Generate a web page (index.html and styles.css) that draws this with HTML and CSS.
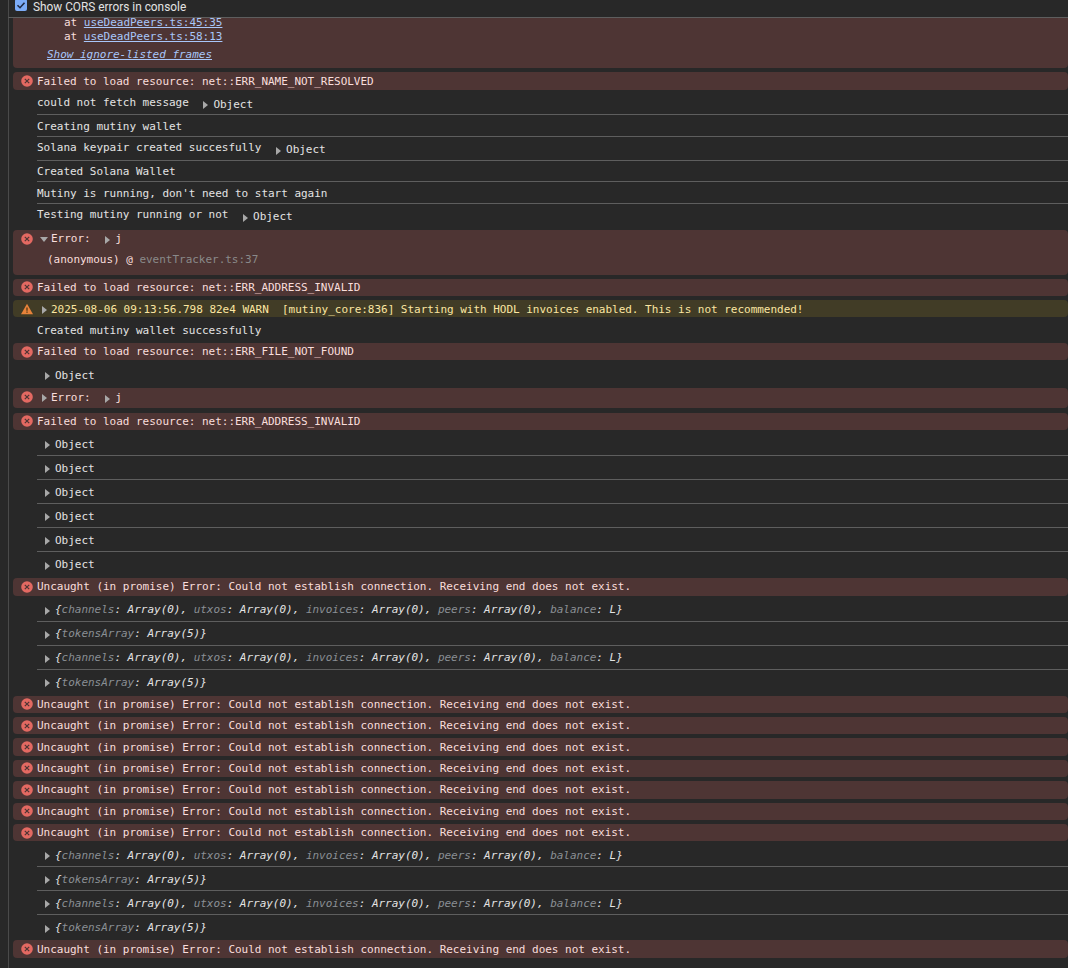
FILE: index.html
```html
<!DOCTYPE html>
<html lang="en">
<head>
    <meta charset="UTF-8">
    <title>Console</title>
    <link rel="stylesheet" href="styles.css">
</head>
<body>
    <svg class="defs" width="0" height="0">
        <symbol id="err" viewBox="0 0 12 12">
            <circle cx="6" cy="6" r="5.8" fill="#e46962"/>
            <path d="M3.8 3.8l4.4 4.4M8.2 3.8l-4.4 4.4" stroke="#4e3534" stroke-width="1.2"/>
        </symbol>
        <symbol id="warn" viewBox="0 0 12 12">
            <path d="M6 .8L12 11.2H0z" fill="#e8833a"/>
            <path d="M6 4.4v3.4M6 8.6v1.2" stroke="#332a10" stroke-width="1.1"/>
        </symbol>
    </svg>

    <div class="toolbar">
        <span class="checkbox">
            <svg width="12" height="12" viewBox="0 0 12 12"><path d="M2.5 6.2l2.5 2.5 4.5-5" fill="none" stroke="#1f2a44" stroke-width="1.6"/></svg>
        </span>
        <span>Show CORS errors in console</span>
    </div>

    <div class="console">
        <div class="msg error stack">
            <div class="trace first">at <a>useDeadPeers.ts:45:35</a></div>
            <div class="trace">at <a>useDeadPeers.ts:58:13</a></div>
            <div class="ignored">Show ignore-listed frames</div>
        </div>

        <div class="msg error"><svg class="icon"><use href="#err"/></svg>Failed to load resource: net::ERR_NAME_NOT_RESOLVED</div>
        <div class="msg log has-obj">could not fetch message <span class="obj"><i class="tri"></i>Object</span></div>
        <div class="msg log">Creating mutiny wallet</div>
        <div class="msg log has-obj">Solana keypair created succesfully <span class="obj"><i class="tri"></i>Object</span></div>
        <div class="msg log">Created Solana Wallet</div>
        <div class="msg log">Mutiny is running, don't need to start again</div>
        <div class="msg log has-obj last">Testing mutiny running or not <span class="obj"><i class="tri"></i>Object</span></div>

        <div class="msg error open">
            <div class="line"><svg class="icon"><use href="#err"/></svg><i class="tri down"></i>Error: <span class="obj"><i class="tri"></i>j</span></div>
            <div class="anon">(anonymous) @ <span class="dim">eventTracker.ts:37</span></div>
        </div>

        <div class="msg error"><svg class="icon"><use href="#err"/></svg>Failed to load resource: net::ERR_ADDRESS_INVALID</div>
        <div class="msg warn"><svg class="icon"><use href="#warn"/></svg><i class="tri lead"></i>2025-08-06 09:13:56.798 82e4 WARN  [mutiny_core:836] Starting with HODL invoices enabled. This is not recommended!</div>
        <div class="msg log last">Created mutiny wallet successfully</div>
        <div class="msg error"><svg class="icon"><use href="#err"/></svg>Failed to load resource: net::ERR_FILE_NOT_FOUND</div>
        <div class="msg log obj-row last"><i class="tri"></i>Object</div>
        <div class="msg error tall"><svg class="icon"><use href="#err"/></svg><i class="tri lead"></i>Error: <span class="obj"><i class="tri"></i>j</span></div>
        <div class="msg error"><svg class="icon"><use href="#err"/></svg>Failed to load resource: net::ERR_ADDRESS_INVALID</div>

        <div class="msg log obj-row"><i class="tri"></i>Object</div>
        <div class="msg log obj-row"><i class="tri"></i>Object</div>
        <div class="msg log obj-row"><i class="tri"></i>Object</div>
        <div class="msg log obj-row"><i class="tri"></i>Object</div>
        <div class="msg log obj-row"><i class="tri"></i>Object</div>
        <div class="msg log obj-row last"><i class="tri"></i>Object</div>

        <div class="msg error"><svg class="icon"><use href="#err"/></svg>Uncaught (in promise) Error: Could not establish connection. Receiving end does not exist.</div>

        <div class="msg log obj-row"><i class="tri"></i><em>{<span class="key">channels</span>: Array(0), <span class="key">utxos</span>: Array(0), <span class="key">invoices</span>: Array(0), <span class="key">peers</span>: Array(0), <span class="key">balance</span>: L}</em></div>
        <div class="msg log obj-row"><i class="tri"></i><em>{<span class="key">tokensArray</span>: Array(5)}</em></div>
        <div class="msg log obj-row"><i class="tri"></i><em>{<span class="key">channels</span>: Array(0), <span class="key">utxos</span>: Array(0), <span class="key">invoices</span>: Array(0), <span class="key">peers</span>: Array(0), <span class="key">balance</span>: L}</em></div>
        <div class="msg log obj-row last"><i class="tri"></i><em>{<span class="key">tokensArray</span>: Array(5)}</em></div>

        <div class="msg error"><svg class="icon"><use href="#err"/></svg>Uncaught (in promise) Error: Could not establish connection. Receiving end does not exist.</div>
        <div class="msg error"><svg class="icon"><use href="#err"/></svg>Uncaught (in promise) Error: Could not establish connection. Receiving end does not exist.</div>
        <div class="msg error"><svg class="icon"><use href="#err"/></svg>Uncaught (in promise) Error: Could not establish connection. Receiving end does not exist.</div>
        <div class="msg error"><svg class="icon"><use href="#err"/></svg>Uncaught (in promise) Error: Could not establish connection. Receiving end does not exist.</div>
        <div class="msg error"><svg class="icon"><use href="#err"/></svg>Uncaught (in promise) Error: Could not establish connection. Receiving end does not exist.</div>
        <div class="msg error"><svg class="icon"><use href="#err"/></svg>Uncaught (in promise) Error: Could not establish connection. Receiving end does not exist.</div>
        <div class="msg error"><svg class="icon"><use href="#err"/></svg>Uncaught (in promise) Error: Could not establish connection. Receiving end does not exist.</div>

        <div class="msg log obj-row"><i class="tri"></i><em>{<span class="key">channels</span>: Array(0), <span class="key">utxos</span>: Array(0), <span class="key">invoices</span>: Array(0), <span class="key">peers</span>: Array(0), <span class="key">balance</span>: L}</em></div>
        <div class="msg log obj-row"><i class="tri"></i><em>{<span class="key">tokensArray</span>: Array(5)}</em></div>
        <div class="msg log obj-row"><i class="tri"></i><em>{<span class="key">channels</span>: Array(0), <span class="key">utxos</span>: Array(0), <span class="key">invoices</span>: Array(0), <span class="key">peers</span>: Array(0), <span class="key">balance</span>: L}</em></div>
        <div class="msg log obj-row last"><i class="tri"></i><em>{<span class="key">tokensArray</span>: Array(5)}</em></div>

        <div class="msg error"><svg class="icon"><use href="#err"/></svg>Uncaught (in promise) Error: Could not establish connection. Receiving end does not exist.</div>
    </div>
</body>
</html>
```

FILE: styles.css
```css
html, body {
    margin: 0;
    padding: 0;
}

body {
    width: 1068px;
    height: 968px;
    overflow: hidden;
    background-color: #282828;
    color: #e3e3e3;
    font-family: "DejaVu Sans Mono", monospace;
    font-size: 11px;
    letter-spacing: -0.022px;
}

.defs {
    position: absolute;
}

.toolbar {
    display: flex;
    align-items: flex-start;
    gap: 6px;
    height: 17px;
    margin-left: 8px;
    padding-left: 6px;
    border-bottom: 1px solid #5e5e5e;
    border-left: 1px solid #4a4a4a;
    font-family: Roboto, sans-serif;
    font-size: 11.85px;
    letter-spacing: 0;
    line-height: 15px;
}

.checkbox {
    flex: none;
    width: 12px;
    height: 12px;
    margin-top: -1px;
    border-radius: 2px;
    background-color: #7cacf8;
}

.console {
    display: flex;
    flex-direction: column;
    height: 950px;
    margin-left: 8px;
    padding-left: 4px;
    border-left: 1px solid #4a4a4a;
}

.msg {
    display: flex;
    flex: none;
    align-items: center;
    white-space: pre;
}

.error, .warn {
    box-sizing: border-box;
    height: 17.4px;
    margin: 2px 0;
    padding-left: 24px;
    position: relative;
    border-radius: 4px;
}

.error {
    background-color: #4e3534;
    color: #f9dedc;
}

.error:last-child {
    margin-top: 1px;
}

.warn {
    padding-top: 1px;
    background-color: #413c26;
    color: #fbe6a2;
}

.error.tall {
    height: 19.5px;
    margin-bottom: 3px;
    padding-bottom: 1px;
}

.icon {
    position: absolute;
    left: 8px;
    top: 2.5px;
    width: 12px;
    height: 12px;
}

.tall .icon, .line .icon {
    top: 3px;
}

.log {
    box-sizing: border-box;
    height: 21.6px;
    margin-left: 24px;
    padding-top: 1px;
    border-bottom: 1px solid #5e5e5e;
}

.log.last {
    border-bottom: none;
}

.log.has-obj {
    align-items: flex-start;
    height: 23.7px;
    padding-top: 3px;
    line-height: 15px;
}

.log.has-obj.last {
    padding-top: 3.5px;
}

.log.obj-row {
    height: 24px;
    padding-left: 8px;
}

.error + .log.obj-row.last {
    padding-top: 2px;
}

.tri {
    display: inline-block;
    flex: none;
    width: 0;
    height: 0;
    margin: 2px 5px 0 0;
    border-left: 5px solid #a8a8a8;
    border-top: 4px solid transparent;
    border-bottom: 4px solid transparent;
}

.tri.lead {
    margin: 1px 4px 0 5px;
}

.tri.down {
    margin: 1px 3px 0 3px;
    border-top: 5px solid #a8a8a8;
    border-left: 4px solid transparent;
    border-right: 4px solid transparent;
    border-bottom: none;
}

.obj {
    display: inline-flex;
    align-items: center;
    margin-left: 8px;
}

.has-obj .obj {
    margin-top: 2px;
}

em {
    font-style: italic;
}

.key {
    color: #8a8f94;
}

.stack {
    display: block;
    height: 50.4px;
    margin-top: 0;
    padding-left: 0;
    border-radius: 0 0 4px 4px;
    white-space: normal;
}

.trace {
    padding-left: 51px;
    line-height: 14px;
}

.trace.first {
    margin-bottom: 2px;
    line-height: 10px;
}

.trace a {
    color: #a8c7fa;
    text-decoration: underline;
}

.ignored {
    margin-top: 3px;
    padding-left: 34px;
    line-height: 16px;
    font-style: italic;
    color: #a8c7fa;
    text-decoration: underline;
}

.open {
    display: block;
    height: 45px;
    white-space: normal;
}

.line {
    display: flex;
    align-items: center;
    height: 18px;
    white-space: pre;
}

.anon {
    padding: 4px 0 0 10px;
    line-height: 15px;
}

.dim {
    color: #8a8a8a;
}
```
